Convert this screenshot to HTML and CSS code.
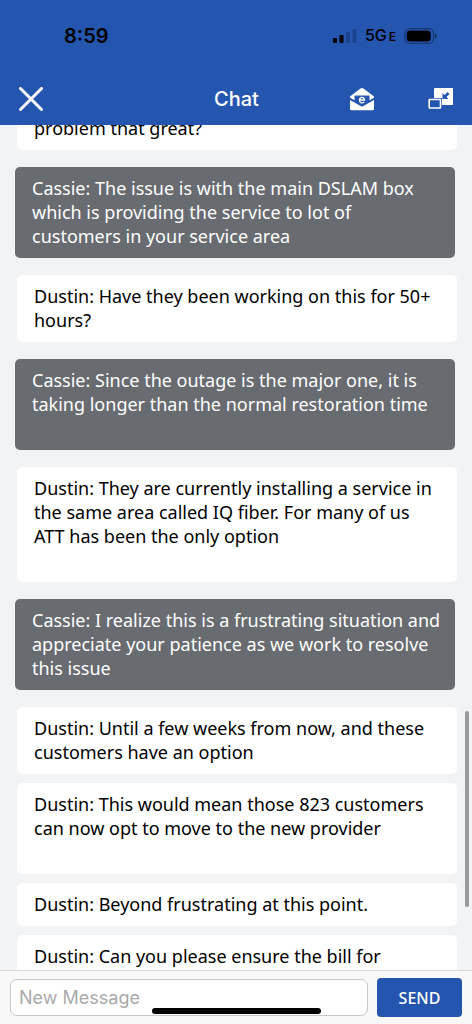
FILE: index.html
```html
<!DOCTYPE html>
<html lang="en">

<head>
  <meta charset="UTF-8" />
  <meta name="viewport" content="width=device-width, initial-scale=1" />
  <title>Chat</title>
  <link rel="stylesheet" href="styles.css">
</head>

<body>
  <div class="app">
    <header class="top">
      <!-- status bar -->
      <div class="status">
        <span class="time">8:59</span>
        <div class="signal">
          <svg width="24" height="16" viewBox="0 0 24 16">
            <rect x="0" y="10" width="4" height="5" rx="1" />
            <rect x="6.500" y="7" width="4" height="8" rx="1" />
            <rect x="13" y="4" width="4" height="11" rx="1" opacity=".2" />
            <rect x="19.500" y="1" width="4" height="14" rx="1" opacity=".2" />
          </svg>
          <span class="net">5G<small>E</small></span>
          <svg width="34" height="16" viewBox="0 0 34 16">
            <rect x="1" y=".7" width="28.600" height="14.600" rx="4.500" fill="none" stroke="#000" stroke-opacity=".45" />
            <rect x="2.700" y="2.500" width="24" height="11" rx="3.500" />
            <path d="M31 5.500c2 .7 2 4.300 0 5z" opacity=".55" />
          </svg>
        </div>
      </div>
      <div class="nav">
        <button type="button" class="icon" aria-label="Close">
          <svg width="24" height="24" viewBox="0 0 24 24">
            <path d="M1.500 1.500l21 21M22.500 1.500l-21 21" stroke="#fff" stroke-width="3" stroke-linecap="round" />
          </svg>
        </button>
        <h1>Chat</h1>
        <div class="actions">
          <button type="button" class="icon" aria-label="Email">
            <svg width="26" height="24" viewBox="0 0 26 24">
              <path d="M1 9.500L11.500 1.500q1.500-1 3 0L25 9.500v1.300l-4.500 2.500V8.500h-15v4.800L1 10.800z" fill="#fff" />
              <path d="M1 13l12 6.700L25 13v8.800q0 1.500-1.500 1.500h-21Q1 23.300 1 21.800z" fill="#fff" />
              <path d="M10.700 13h4.800c0-3.600-5-3.600-5 .200 0 3 3.200 3.400 4.700 1.800" fill="none" stroke="#fff" stroke-width="1.300" />
            </svg>
          </button>
          <button type="button" class="icon" aria-label="Minimize">
            <svg width="26" height="22" viewBox="0 0 26 22">
              <path d="M7 0h17.500q.5 0 .5.500v16q0 .5-.5.500H14V10H6V1q0-1 1-1z" fill="#fff" />
              <path d="M14.500 5v6h6l-2-2 3-3-2-2-3 3z" fill="#2456b0" />
              <rect x="1.200" y="11.500" width="11.300" height="8.500" rx=".5" fill="#2456b0" stroke="#fff" stroke-width="1.600" />
            </svg>
          </button>
        </div>
      </div>
    </header>

    <main class="chat">
      <ul>
        <li>problem that great?</li>
        <li class="agent">Cassie: The issue is with the main DSLAM box which is providing the service to lot of customers in your service area</li>
        <li>Dustin: Have they been working on this for 50+ hours?</li>
        <li class="agent blank">Cassie: Since the outage is the major one, it is taking longer than the normal restoration time</li>
        <li class="blank">Dustin: They are currently installing a service in the same area called IQ fiber. For many of us ATT has been the only option</li>
        <li class="agent">Cassie: I realize this is a frustrating situation and appreciate your patience as we work to resolve this issue</li>
        <li>Dustin: Until a few weeks from now, and these customers have an option</li>
        <li class="blank">Dustin: This would mean those 823 customers can now opt to move to the new provider</li>
        <li>Dustin: Beyond frustrating at this point.</li>
        <li>Dustin: Can you please ensure the bill for</li>
      </ul>
      <span class="thumb"></span>
    </main>

    <form class="bar">
      <input type="text" placeholder="New Message" aria-label="New Message" />
      <button type="button" class="send">SEND</button>
      <span class="home"></span>
    </form>
  </div>
</body>

</html>
```
FILE: styles.css
```css
* {
  padding: 0;
  margin: 0;
  box-sizing: border-box;
}

body {
  font-family: "Noto Sans", sans-serif;
  font-size: 18px;
  line-height: 24px;
  font-weight: 400;
  color: #000;
  background: #f2f3f5;
}

ul {
  list-style: none;
}

button {
  border: 0;
  background: none;
  cursor: pointer;
}

svg {
  display: block;
}

.app {
  height: 100vh;
  display: flex;
  flex-direction: column;
}

/* header */
.top {
  background: #2456b0;
}

.status {
  display: flex;
  justify-content: space-between;
  align-items: center;
  height: 72px;
  padding: 0 34px 0 64px;
  color: #000;
  font-family: Inter, sans-serif;
}

.time {
  font-size: 20px;
  font-weight: 600;
}

.signal {
  display: flex;
  align-items: center;
  gap: 8px;
}

.net {
  font-size: 16px;
  font-weight: 500;
}

.net small {
  font-size: 12px;
  font-weight: 600;
  margin-left: 2px;
}

.nav {
  display: grid;
  grid-template-columns: 1fr auto 1fr;
  align-items: center;
  height: 53px;
  padding: 0 18px 0 19px;
}

.nav h1 {
  color: #fff;
  font-family: Inter, sans-serif;
  font-size: 20px;
  font-weight: 500;
}

.icon {
  justify-self: start;
}

.actions {
  display: flex;
  align-items: center;
  justify-content: flex-end;
  gap: 53px;
}

/* messages */
.chat {
  flex: 1;
  min-height: 0;
  overflow: hidden;
  position: relative;
}

.chat ul {
  margin-top: -18px;
  padding: 0 15px 0 17px;
}

.chat li {
  padding: 9px 17px 10px;
  margin-bottom: 9px;
  border-radius: 5px;
  background: #fff;
}

.chat li.agent {
  margin: 17px 2px 17px -2px;
  padding-right: 13px;
  color: #fff;
  background: #686b70;
}

.chat li.blank {
  padding-bottom: 34px;
}

.thumb {
  position: absolute;
  right: 3px;
  top: 586px;
  width: 4px;
  height: 196px;
  border-radius: 2px;
  background: #98999c;
}

/* input row */
.bar {
  display: flex;
  align-items: center;
  gap: 9px;
  height: 54px;
  padding: 0 10px;
  border-top: 1px solid #d8d9dc;
  background: #f8f8f9;
  position: relative;
}

.bar input {
  flex: 1;
  min-width: 0;
  height: 37px;
  padding: 0 8px;
  border: 1px solid #c6c7cb;
  border-radius: 7px;
  background: #fff;
  font-family: Inter, sans-serif;
  font-size: 18px;
}

.bar input::placeholder {
  color: #a9a9ab;
}

.send {
  width: 85px;
  height: 39px;
  border-radius: 4px;
  color: #fff;
  background: #2456b0;
  font-family: inherit;
  font-size: 16px;
  font-weight: 500;
}

.home {
  position: absolute;
  left: 50%;
  bottom: 10px;
  width: 169px;
  height: 6px;
  margin-left: -84px;
  border-radius: 3px;
  background: #000;
}
```
